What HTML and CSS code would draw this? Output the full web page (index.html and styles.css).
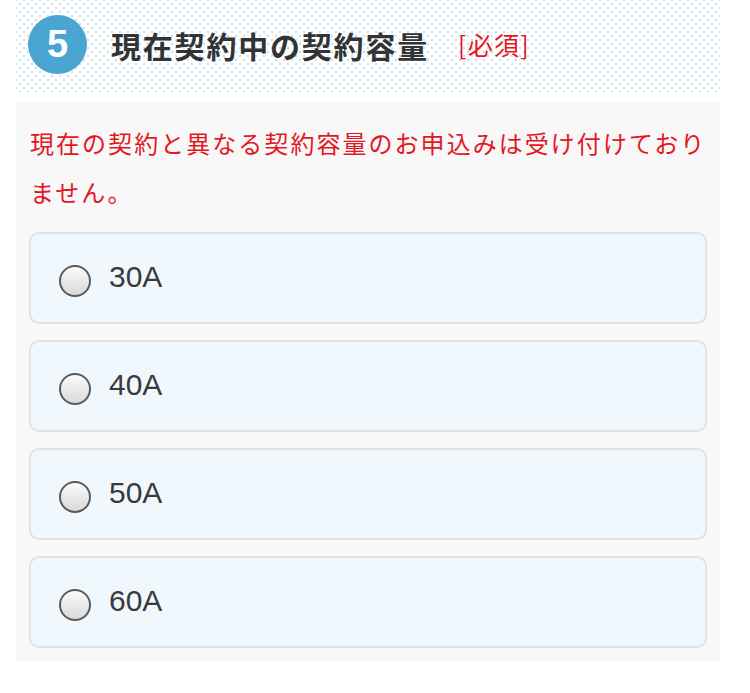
FILE: index.html
```html
<!DOCTYPE html>
<html lang="ja">
<head>
    <meta charset="UTF-8">
    <meta name="viewport" content="width=device-width, initial-scale=1.0">
    <title>現在契約中の契約容量</title>
    <link rel="stylesheet" href="styles.css">
</head>
<body>
    <div class="section">
        <div class="heading">
            <span class="step">5</span>
            <h2>現在契約中の契約容量</h2>
            <span class="required">[必須]</span>
        </div>

        <div class="panel">
            <p class="notice">現在の契約と異なる契約容量のお申込みは受け付けておりません。</p>

            <label class="option"><input type="radio" name="capacity" value="30"><span>30A</span></label>
            <label class="option"><input type="radio" name="capacity" value="40"><span>40A</span></label>
            <label class="option"><input type="radio" name="capacity" value="50"><span>50A</span></label>
            <label class="option"><input type="radio" name="capacity" value="60"><span>60A</span></label>
        </div>
    </div>
</body>
</html>
```

FILE: styles.css
```css
body {
    background-color: #fff;
    color: #333;
    font-family: "Noto Sans CJK JP", "Noto Sans", sans-serif;
    margin: 0;
    padding: 0;
}
.section {
    margin: 0 30px 0 16px;
}
.heading {
    display: flex;
    align-items: center;
    height: 92px;
    padding-left: 12px;
    background-color: #fff;
    background-image:
        radial-gradient(circle, #c3e1f1 1px, transparent 1.4px),
        radial-gradient(circle, #c3e1f1 1px, transparent 1.4px);
    background-size: 8px 8px;
    background-position: 0 0, 4px 4px;
}
.step {
    display: flex;
    align-items: center;
    justify-content: center;
    width: 59px;
    height: 59px;
    border-radius: 50%;
    background-color: #4aa6d0;
    color: #fff;
    font-family: "Liberation Sans", Arial, sans-serif;
    font-weight: bold;
    font-size: 38px;
    margin-top: -3px;
}
.heading h2 {
    margin: -2px 0 0 24px;
    font-size: 30px;
    font-weight: bold;
    letter-spacing: 0.06em;
    color: #333;
}
.required {
    margin: -4px 0 0 29px;
    color: #e5161f;
    font-size: 25px;
    letter-spacing: 0.05em;
}
.panel {
    margin-top: 11px;
    background-color: #f8f8f8;
    padding: 15px 13px 13px;
}
.notice {
    margin: 0 0 16px 1px;
    color: #e5161f;
    font-size: 24px;
    line-height: 49px;
    letter-spacing: 0.085em;
}
.option {
    display: flex;
    align-items: center;
    height: 88px;
    margin-bottom: 16px;
    padding-left: 28px;
    background-color: #f0f7fd;
    border: 2px solid #dfe2e5;
    border-radius: 10px;
    cursor: pointer;
}
.option:last-child {
    margin-bottom: 0;
}
.option input {
    appearance: none;
    -webkit-appearance: none;
    width: 32px;
    height: 32px;
    margin: 6px 0 0 0;
    border: 2px solid #5a5a5a;
    border-radius: 50%;
    background: linear-gradient(#fbfbfb, #d9d9d9);
    box-sizing: border-box;
}
.option span {
    margin: -2px 0 0 18px;
    font-family: "Liberation Sans", Arial, sans-serif;
    font-size: 30px;
    color: #3a3a3a;
}
```
